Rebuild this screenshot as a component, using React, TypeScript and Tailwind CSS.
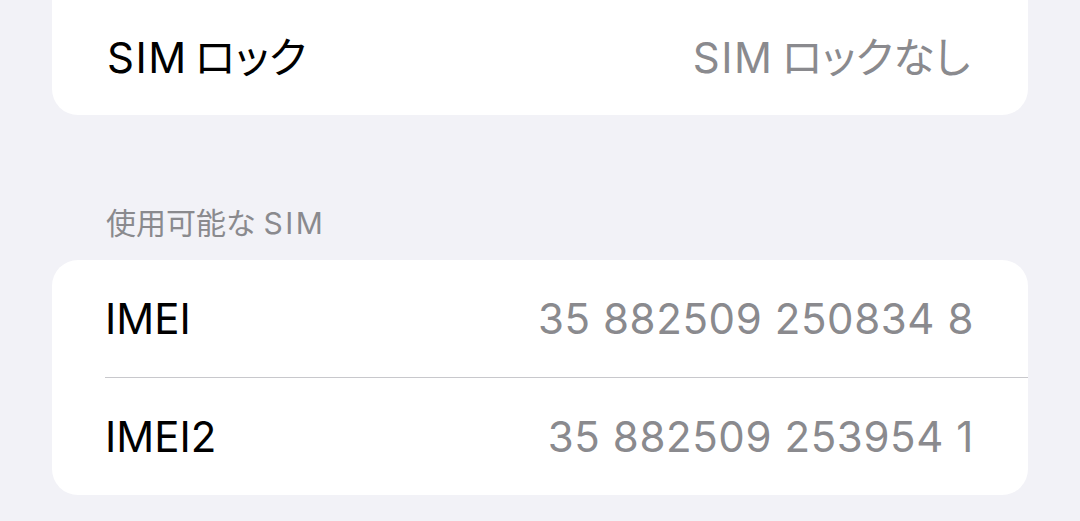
import React from "react";

const font = { fontFamily: '"Inter", "Noto Sans CJK JP", sans-serif' };

function Sim({ gap }: { gap: string }) {
  return <span className={`tracking-[1.5px] ${gap}`}>SIM</span>;
}

function Row({ label, value }: { label: string; value: string }) {
  return (
    <div className="flex h-[117px] items-center justify-between pl-[53px] pr-[54px]">
      <span className="text-[42px] leading-none text-black">{label}</span>
      <span className="text-[42px] leading-none tracking-[0.6px] text-[#8a8a8e]">{value}</span>
    </div>
  );
}

export default function App() {
  return (
    <div className="h-[521px] w-[1080px] overflow-hidden bg-[#f2f2f7] px-[52px] [font-feature-settings:'palt']" style={font}>
      <div className="flex h-[115px] items-center justify-between rounded-b-[26px] bg-white pl-[55px] pr-[58px]">
        <span className="text-[42px] leading-none text-black">
          <Sim gap="mr-[7px]" />ロック
        </span>
        <span className="text-[42px] leading-none text-[#8a8a8e]">
          <Sim gap="mr-[8px]" />ロックなし
        </span>
      </div>
      <div className="pl-[54px] pt-[90px] pb-[19px]">
        <span className="block text-[30px] leading-[36px] text-[#8a8a8e]">
          使用可能な<span className="ml-[8px] tracking-[2.5px]">SIM</span>
        </span>
      </div>
      <div className="overflow-hidden rounded-[26px] bg-white">
        <Row label="IMEI" value="35 882509 250834 8" />
        <div className="ml-[53px] h-px bg-[#c8c8cc]" />
        <Row label="IMEI2" value="35 882509 253954 1" />
      </div>
    </div>
  );
}
